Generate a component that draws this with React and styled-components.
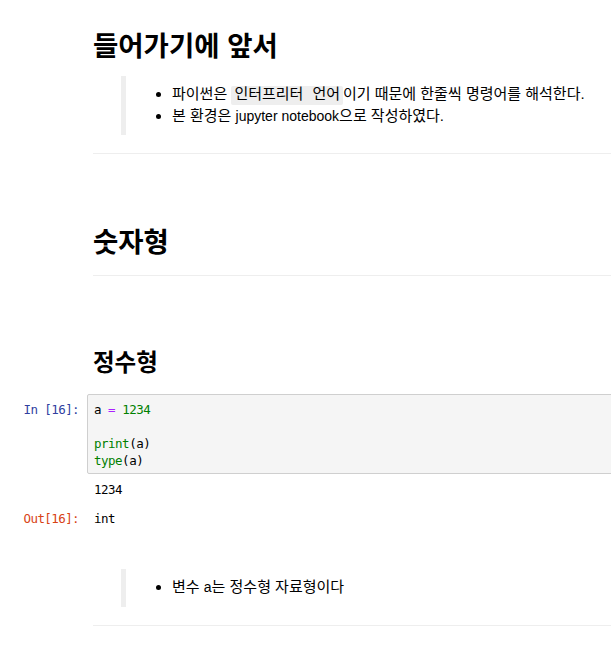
import styled, { createGlobalStyle } from "styled-components";

const GlobalStyle = createGlobalStyle`
  html, body {
    margin: 0;
    padding: 0;
    background: #fff;
    overflow: hidden;
  }
  #root {
    width: 611px;
    height: 670px;
    overflow: hidden;
  }
`;

const Notebook = styled.div`
  width: 1100px;
  padding-top: 31px;
  font-family: "Liberation Sans", "Noto Sans CJK KR", sans-serif;
  font-size: 15px;
  color: #000;
`;

const Cell = styled.div`
  display: flex;
  flex-direction: row;
  margin-top: ${(p) => p.$gap || 0}px;
`;

const Prompt = styled.div`
  width: 87px;
  flex-shrink: 0;
  box-sizing: border-box;
  padding-right: 8px;
  text-align: right;
  font-family: "DejaVu Sans Mono", "Liberation Mono", monospace;
  font-size: 12.5px;
  letter-spacing: -0.6px;
  line-height: 17px;
  color: ${(p) => (p.$out ? "#d84315" : "#303f9f")};
  padding-top: ${(p) => p.$top || 0}px;
`;

const Markdown = styled.div`
  flex-grow: 1;
  padding-left: 6px;
`;

const H1 = styled.h1`
  margin: 0;
  font-size: 27.5px;
  line-height: 32px;
  font-weight: bold;
`;

const H2 = styled.h2`
  margin: 0;
  font-size: 23.5px;
  line-height: 28px;
  font-weight: bold;
`;

const Quote = styled.blockquote`
  margin: ${(p) => p.$top || 0}px 0 0 28px;
  border-left: 5px solid #eee;
  padding: 8px 0 ${(p) => p.$bottom || 9}px;

  ul {
    margin: 0;
    padding-left: 46px;
  }
  li {
    line-height: 20px;
  }
`;

const Latin = styled.span`
  font-size: 14px;
`;

const InlineCode = styled.code`
  font-family: "Liberation Mono", "Noto Sans CJK KR", monospace;
  font-size: 15px;
  background: #eee;
  padding: 1px 3px;
  border-radius: 2px;
`;

const Rule = styled.hr`
  margin: ${(p) => p.$top || 0}px 0 0;
  border: none;
  border-top: 1px solid #eee;
  height: 0;
`;

const InputArea = styled.div`
  flex-grow: 1;
  background: #f5f5f5;
  border: 1px solid #cfcfcf;
  border-radius: 2px;
  padding: 6px 6px 4px;
`;

const CodeLine = styled.div`
  font-family: "DejaVu Sans Mono", "Liberation Mono", monospace;
  font-size: 12.5px;
  letter-spacing: -0.5px;
  line-height: 17px;
  height: 17px;
  white-space: pre;
`;

const Tok = styled.span`
  color: ${(p) => p.$c || "#000"};
`;

const OutputArea = styled.div`
  flex-grow: 1;
  padding: ${(p) => p.$top || 6}px 7px 6px;
  font-family: "DejaVu Sans Mono", "Liberation Mono", monospace;
  font-size: 12.5px;
  letter-spacing: -0.5px;
  line-height: 17px;
`;

export default function App() {
  return (
    <>
      <GlobalStyle />
      <Notebook>
        <Cell>
          <Prompt />
          <Markdown>
            <H1>들어가기에 앞서</H1>
            <Quote $top={13}>
              <ul>
                <li>
                  파이썬은 <InlineCode>인터프리터 언어</InlineCode>이기 때문에 한줄씩 명령어를 해석한다.
                </li>
                <li>
                  본 환경은 <Latin>jupyter notebook</Latin>으로 작성하였다.
                </li>
              </ul>
            </Quote>
            <Rule $top={18} />
          </Markdown>
        </Cell>

        <Cell $gap={73}>
          <Prompt />
          <Markdown>
            <H1>숫자형</H1>
            <Rule $top={16} />
          </Markdown>
        </Cell>

        <Cell $gap={73}>
          <Prompt />
          <Markdown>
            <H2>정수형</H2>
          </Markdown>
        </Cell>

        <Cell $gap={17}>
          <Prompt $top={7}>In [16]:</Prompt>
          <InputArea>
            <CodeLine>
              <Tok>a </Tok>
              <Tok $c="#aa22ff">=</Tok>
              <Tok> </Tok>
              <Tok $c="#008000">1234</Tok>
            </CodeLine>
            <CodeLine> </CodeLine>
            <CodeLine>
              <Tok $c="#008000">print</Tok>
              <Tok>(a)</Tok>
            </CodeLine>
            <CodeLine>
              <Tok $c="#008000">type</Tok>
              <Tok>(a)</Tok>
            </CodeLine>
          </InputArea>
        </Cell>

        <Cell>
          <Prompt />
          <OutputArea $top={7}>1234</OutputArea>
        </Cell>
        <Cell>
          <Prompt $out $top={6}>Out[16]:</Prompt>
          <OutputArea>int</OutputArea>
        </Cell>

        <Cell $gap={36}>
          <Prompt />
          <Markdown>
            <Quote $bottom={10}>
              <ul>
                <li>
                  변수 <Latin>a</Latin>는 정수형 자료형이다
                </li>
              </ul>
            </Quote>
            <Rule $top={18} />
          </Markdown>
        </Cell>
      </Notebook>
    </>
  );
}
